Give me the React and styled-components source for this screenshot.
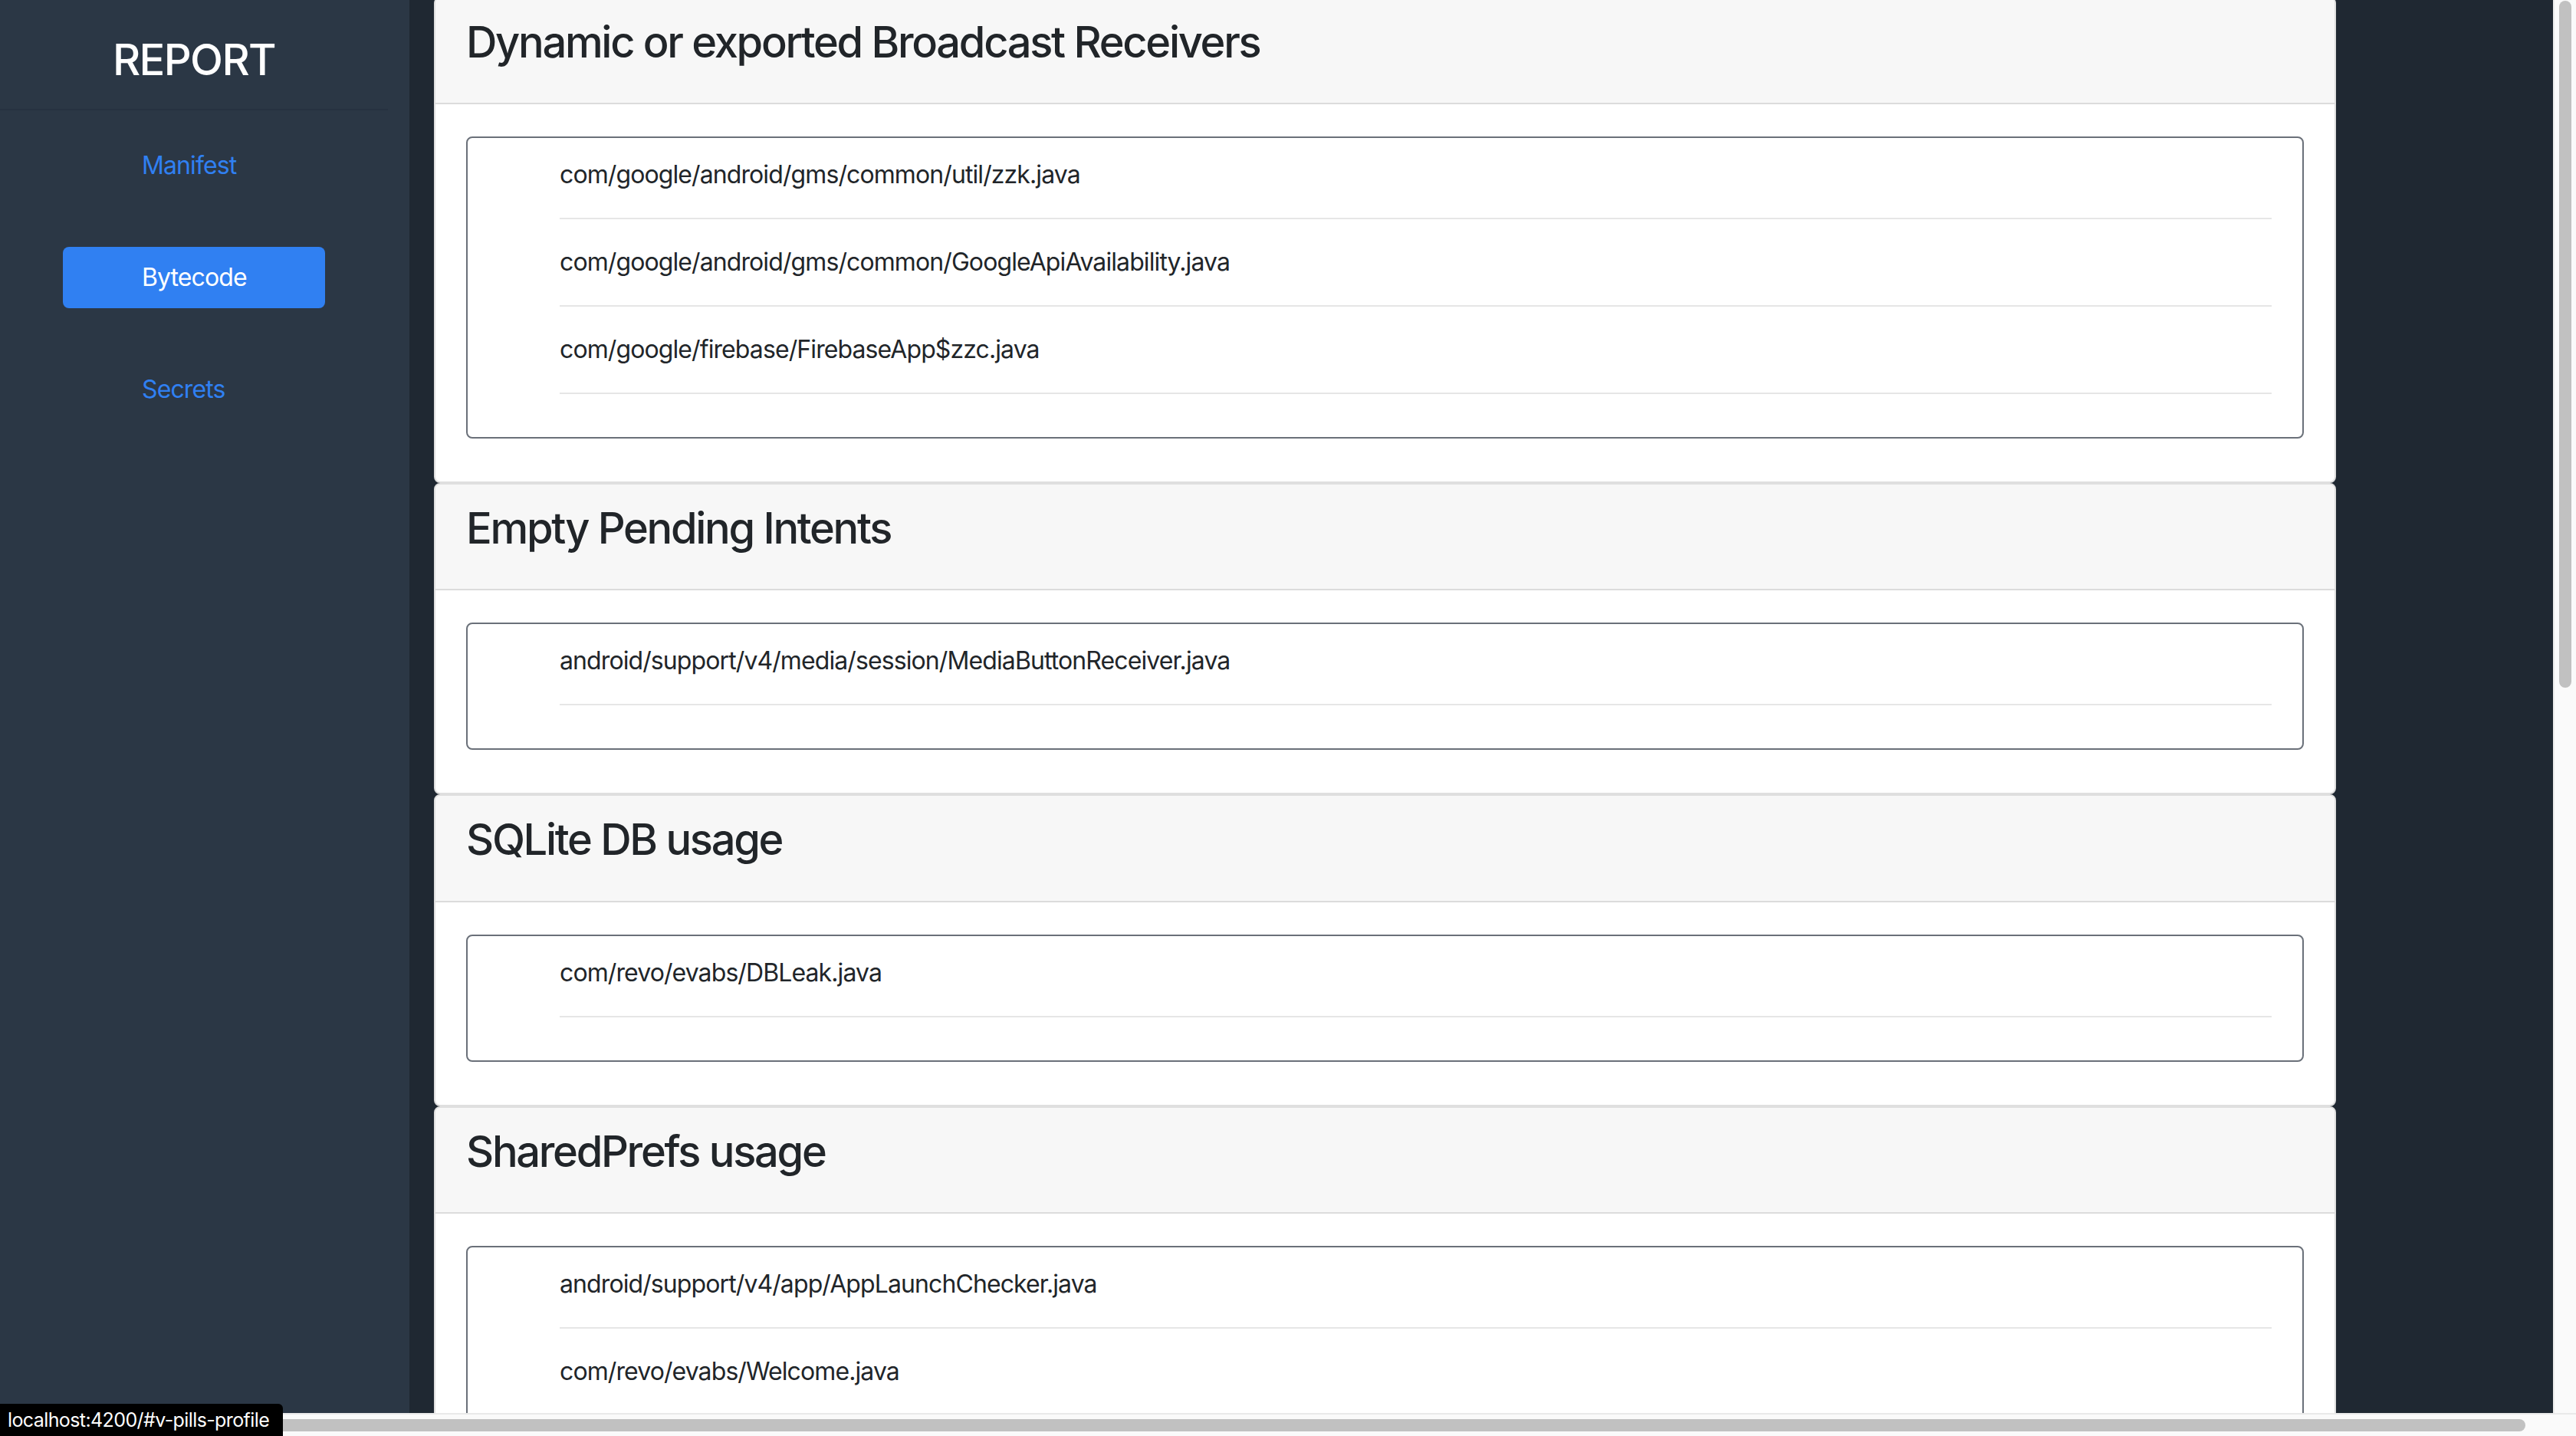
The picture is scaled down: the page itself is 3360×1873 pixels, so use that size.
import React from "react";
import styled, { createGlobalStyle } from "styled-components";

const GlobalStyle = createGlobalStyle`
  html, body { margin: 0; padding: 0; overflow: hidden; }
  body { font-family: Inter, "Noto Sans", "Liberation Sans", sans-serif; }
  * { box-sizing: border-box; }
`;

const Page = styled.div`
  position: relative;
  width: 3360px;
  height: 1873px;
  display: flex;
  flex-direction: column;
  overflow: hidden;
`;

const Row = styled.div`
  display: flex;
  height: 1843px;
  overflow: hidden;
`;

const Sidebar = styled.aside`
  width: 534px;
  flex: none;
  background: #2b3745;
`;

const Brand = styled.div`
  width: 506px;
  height: 144px;
  padding-top: 45px;
  border-bottom: 2px solid #263140;
  color: #ffffff;
  font-size: 56px;
  line-height: 67px;
  font-weight: 500;
  letter-spacing: -1.6px;
  text-align: center;
`;

const Nav = styled.nav`
  width: 506px;
  display: flex;
  flex-direction: column;
  align-items: center;
  gap: 66px;
  padding-top: 32px;
`;

const NavLink = styled.a`
  display: block;
  width: 342px;
  height: 80px;
  padding-left: 103px;
  line-height: 80px;
  font-size: 32px;
  letter-spacing: -0.9px;
  border-radius: 8px;
  text-decoration: none;
  color: ${(p) => (p.$active ? "#ffffff" : "#3080f2")};
  background: ${(p) => (p.$active ? "#3080f2" : "transparent")};
`;

const Main = styled.main`
  flex: 1;
  background: #1f2832;
  padding-left: 32px;
  overflow: hidden;
`;

const Cards = styled.div`
  width: 2481px;
  margin-top: -4px;
`;

const Card = styled.section`
  background: #ffffff;
  border: 2px solid #dfdfdf;
  border-radius: 8px;
  overflow: hidden;
`;

const CardHeader = styled.header`
  background: #f7f7f7;
  padding: 24px 40px;
  border-bottom: 2px solid #dcdcdc;
`;

const Title = styled.h3`
  margin: 0 0 21px;
  font-size: 56px;
  line-height: 1.2;
  font-weight: 500;
  letter-spacing: -2.3px;
  color: #212529;
`;

const CardBody = styled.div`
  padding: 42px 40px 40px;
`;

const ListBox = styled.div`
  border: 2px solid #6a7079;
  border-radius: 8px;
  padding: 24px 40px;
  margin-bottom: 16px;
`;

const List = styled.ul`
  margin: 0;
  padding: 0 0 0 80px;
  list-style: none;
`;

const Item = styled.li`
  font-size: 32px;
  line-height: 48px;
  letter-spacing: -0.9px;
  color: #212529;
  padding-bottom: 32px;
  border-bottom: 2px solid #e6e6e6;
  margin-bottom: 32px;
`;

const VScroll = styled.div`
  width: 30px;
  flex: none;
  background: #fafafa;
  border-left: 2px solid #ececec;
  padding: 1px 0 0 6px;
`;

const VThumb = styled.div`
  width: 16px;
  height: 896px;
  border-radius: 8px;
  background: #c1c1c1;
`;

const HScroll = styled.div`
  height: 30px;
  flex: none;
  background: #fafafa;
  border-top: 2px solid #e9e9e9;
  padding: 6px 66px 0 8px;
`;

const HThumb = styled.div`
  height: 16px;
  border-radius: 8px;
  background: #c1c1c1;
`;

const StatusTip = styled.div`
  position: absolute;
  left: 0;
  bottom: 0;
  width: 369px;
  height: 42px;
  padding-left: 10px;
  background: #000000;
  border-top-right-radius: 6px;
  color: #ffffff;
  font-size: 25px;
  letter-spacing: -0.6px;
  line-height: 42px;
  white-space: nowrap;
  overflow: hidden;
`;

const sections = [
  {
    title: "Dynamic or exported Broadcast Receivers",
    files: [
      "com/google/android/gms/common/util/zzk.java",
      "com/google/android/gms/common/GoogleApiAvailability.java",
      "com/google/firebase/FirebaseApp$zzc.java",
    ],
  },
  {
    title: "Empty Pending Intents",
    files: ["android/support/v4/media/session/MediaButtonReceiver.java"],
  },
  {
    title: "SQLite DB usage",
    files: ["com/revo/evabs/DBLeak.java"],
  },
  {
    title: "SharedPrefs usage",
    files: [
      "android/support/v4/app/AppLaunchChecker.java",
      "com/revo/evabs/Welcome.java",
    ],
  },
];

export default function App() {
  return (
    <Page>
      <GlobalStyle />
      <Row>
        <Sidebar>
          <Brand>REPORT</Brand>
          <Nav>
            <NavLink href="#v-pills-home">Manifest</NavLink>
            <NavLink href="#v-pills-profile" $active>
              Bytecode
            </NavLink>
            <NavLink href="#v-pills-messages">Secrets</NavLink>
          </Nav>
        </Sidebar>
        <Main>
          <Cards>
            {sections.map((s) => (
              <Card key={s.title}>
                <CardHeader>
                  <Title>{s.title}</Title>
                </CardHeader>
                <CardBody>
                  <ListBox>
                    <List>
                      {s.files.map((f) => (
                        <Item key={f}>{f}</Item>
                      ))}
                    </List>
                  </ListBox>
                </CardBody>
              </Card>
            ))}
          </Cards>
        </Main>
        <VScroll>
          <VThumb />
        </VScroll>
      </Row>
      <HScroll>
        <HThumb />
      </HScroll>
      <StatusTip>localhost:4200/#v-pills-profile</StatusTip>
    </Page>
  );
}
